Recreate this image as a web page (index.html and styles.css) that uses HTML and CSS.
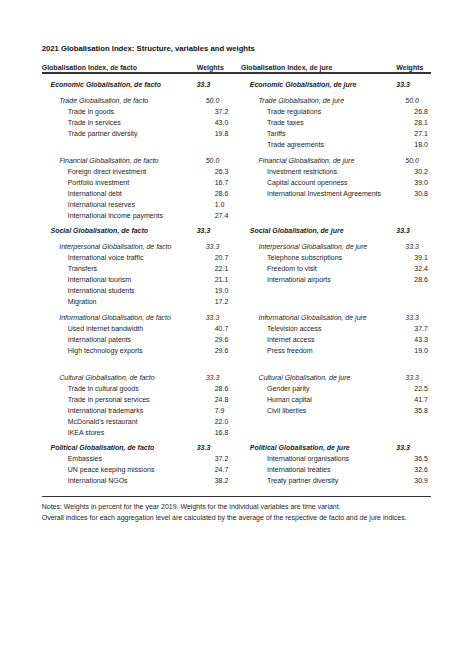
FILE: index.html
```html
<!DOCTYPE html>
<html>
<head>
<meta charset="utf-8">
<link rel="stylesheet" href="styles.css">
</head>
<body>
<div class="page">
  <div class="title">2021 Globalisation Index: Structure, variables and weights</div>
  <div class="row head">
    <span class="lab">Globalisation Index, de facto</span><span class="wt">Weights</span>
    <span class="lab">Globalisation Index, de jure</span><span class="wt">Weights</span>
  </div>
  <div class="body">
    <div class="row main first"><span class="lab">Economic Globalisation, de facto</span><span class="wt">33.3</span><span class="lab">Economic Globalisation, de jure</span><span class="wt">33.3</span></div>
    <div class="row sub"><span class="lab">Trade Globalisation, de facto</span><span class="wt">50.0</span><span class="lab">Trade Globalisation, de jure</span><span class="wt">50.0</span></div>
    <div class="row item"><span class="lab">Trade in goods</span><span class="wt">37.2</span><span class="lab">Trade regulations</span><span class="wt">26.8</span></div>
    <div class="row item"><span class="lab">Trade in services</span><span class="wt">43.0</span><span class="lab">Trade taxes</span><span class="wt">28.1</span></div>
    <div class="row item"><span class="lab">Trade partner diversity</span><span class="wt">19.8</span><span class="lab">Tariffs</span><span class="wt">27.1</span></div>
    <div class="row item"><span class="lab"></span><span class="wt"></span><span class="lab">Trade agreements</span><span class="wt">18.0</span></div>
    <div class="row sub"><span class="lab">Financial Globalisation, de facto</span><span class="wt">50.0</span><span class="lab">Financial Globalisation, de jure</span><span class="wt">50.0</span></div>
    <div class="row item"><span class="lab">Foreign direct investment</span><span class="wt">26.3</span><span class="lab">Investment restrictions</span><span class="wt">30.2</span></div>
    <div class="row item"><span class="lab">Portfolio investment</span><span class="wt">16.7</span><span class="lab">Capital account openness</span><span class="wt">39.0</span></div>
    <div class="row item"><span class="lab">International debt</span><span class="wt">28.6</span><span class="lab">International Investment Agreements</span><span class="wt">30.8</span></div>
    <div class="row item"><span class="lab">International reserves</span><span class="wt">1.0</span><span class="lab"></span><span class="wt"></span></div>
    <div class="row item"><span class="lab">International income payments</span><span class="wt">27.4</span><span class="lab"></span><span class="wt"></span></div>
    <div class="row main"><span class="lab">Social Globalisation, de facto</span><span class="wt">33.3</span><span class="lab">Social Globalisation, de jure</span><span class="wt">33.3</span></div>
    <div class="row sub"><span class="lab">Interpersonal Globalisation, de facto</span><span class="wt">33.3</span><span class="lab">Interpersonal Globalisation, de jure</span><span class="wt">33.3</span></div>
    <div class="row item"><span class="lab">International voice traffic</span><span class="wt">20.7</span><span class="lab">Telephone subscriptions</span><span class="wt">39.1</span></div>
    <div class="row item"><span class="lab">Transfers</span><span class="wt">22.1</span><span class="lab">Freedom to visit</span><span class="wt">32.4</span></div>
    <div class="row item"><span class="lab">International tourism</span><span class="wt">21.1</span><span class="lab">International airports</span><span class="wt">28.6</span></div>
    <div class="row item"><span class="lab">International students</span><span class="wt">19.0</span><span class="lab"></span><span class="wt"></span></div>
    <div class="row item"><span class="lab">Migration</span><span class="wt">17.2</span><span class="lab"></span><span class="wt"></span></div>
    <div class="row sub"><span class="lab">Informational Globalisation, de facto</span><span class="wt">33.3</span><span class="lab">Informational Globalisation, de jure</span><span class="wt">33.3</span></div>
    <div class="row item"><span class="lab">Used internet bandwidth</span><span class="wt">40.7</span><span class="lab">Television access</span><span class="wt">37.7</span></div>
    <div class="row item"><span class="lab">International patents</span><span class="wt">29.6</span><span class="lab">Internet access</span><span class="wt">43.3</span></div>
    <div class="row item"><span class="lab">High technology exports</span><span class="wt">29.6</span><span class="lab">Press freedom</span><span class="wt">19.0</span></div>
    <div class="row blank"></div>
    <div class="row sub"><span class="lab">Cultural Globalisation, de facto</span><span class="wt">33.3</span><span class="lab">Cultural Globalisation, de jure</span><span class="wt">33.3</span></div>
    <div class="row item"><span class="lab">Trade in cultural goods</span><span class="wt">28.6</span><span class="lab">Gender parity</span><span class="wt">22.5</span></div>
    <div class="row item"><span class="lab">Trade in personal services</span><span class="wt">24.8</span><span class="lab">Human capital</span><span class="wt">41.7</span></div>
    <div class="row item"><span class="lab">International trademarks</span><span class="wt">7.9</span><span class="lab">Civil liberties</span><span class="wt">35.8</span></div>
    <div class="row item"><span class="lab">McDonald's restaurant</span><span class="wt">22.0</span><span class="lab"></span><span class="wt"></span></div>
    <div class="row item"><span class="lab">IKEA stores</span><span class="wt">16.8</span><span class="lab"></span><span class="wt"></span></div>
    <div class="row main"><span class="lab">Political Globalisation, de facto</span><span class="wt">33.3</span><span class="lab">Political Globalisation, de jure</span><span class="wt">33.3</span></div>
    <div class="row item"><span class="lab">Embassies</span><span class="wt">37.2</span><span class="lab">International organisations</span><span class="wt">36.5</span></div>
    <div class="row item"><span class="lab">UN peace keeping missions</span><span class="wt">24.7</span><span class="lab">International treaties</span><span class="wt">32.6</span></div>
    <div class="row item"><span class="lab">International NGOs</span><span class="wt">38.2</span><span class="lab">Treaty partner diversity</span><span class="wt">30.9</span></div>
  </div>
  <div class="notes">
    <p>Notes: Weights in percent for the year 2019. Weights for the individual variables are time variant.</p>
    <p>Overall indices for each aggregation level are calculated by the average of the respective de facto and de jure indices.</p>
  </div>
</div>
</body>
</html>
```
FILE: styles.css
```css
html, body {
  margin: 0;
  padding: 0;
  background: #ffffff;
}
body {
  font-family: "Liberation Sans", Arial, sans-serif;
  color: #1c1c1c;
  font-size: 7px;
}
.page {
  width: 389.3px;
  padding: 44px 0 0 41.7px;
}
.title {
  font-weight: bold;
  font-size: 7.7px;
  line-height: 10px;
  color: #111;
  white-space: nowrap;
}
.row {
  display: grid;
  grid-template-columns: 155px 44.3px 155.3px 34.7px;
  line-height: 11px;
  white-space: nowrap;
}
.row.head {
  margin-top: 10px;
  line-height: 8px;
  font-weight: bold;
  border-bottom: 2px solid #333;
}
.body {
  padding-bottom: 10px;
  border-bottom: 1.5px solid #333;
}
.row.main {
  padding-top: 4px;
  font-weight: bold;
  font-style: italic;
}
.row.main.first {
  padding-top: 5px;
}
.row.sub {
  padding-top: 5px;
  font-style: italic;
}
.row.blank {
  height: 11px;
}
.main .lab { padding-left: 8.8px; }
.sub .lab { padding-left: 17.6px; }
.item .lab { padding-left: 26px; }
.main .wt { padding-left: 0; }
.sub .wt { padding-left: 9px; }
.item .wt { padding-left: 18px; }
.notes {
  margin-top: 5px;
}
.notes p {
  margin: 0;
  line-height: 10.5px;
  white-space: nowrap;
}
```
